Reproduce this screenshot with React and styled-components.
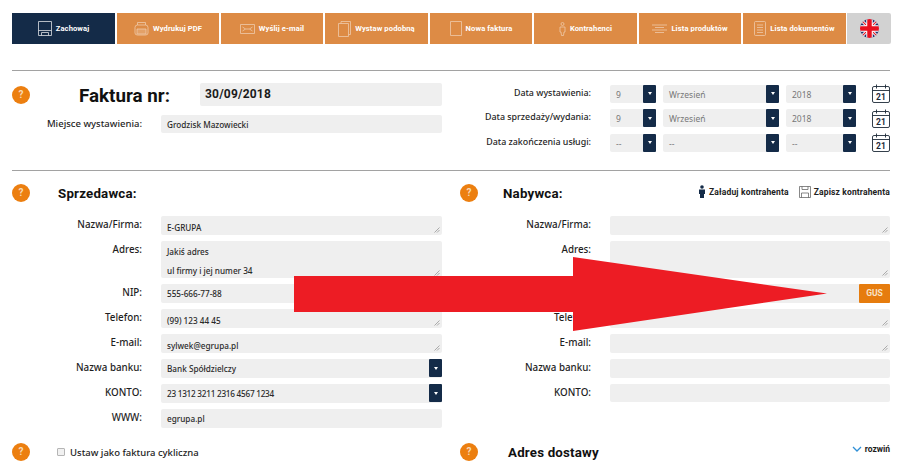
import React from "react";
import styled, { createGlobalStyle } from "styled-components";

const GlobalStyle = createGlobalStyle`
  html, body {
    margin: 0;
    padding: 0;
    background: #fff;
  }
  body {
    font-family: "Noto Sans", "Open Sans", sans-serif;
    color: #1b1b1b;
    overflow: hidden;
  }
`;

const Page = styled.div`
  position: relative;
  width: 900px;
  height: 467px;
  overflow: hidden;
  padding: 13px 10px 0 12px;
  box-sizing: border-box;
`;

const Toolbar = styled.div`
  display: grid;
  grid-template-columns: 103px 102px 102px 103px 102px 103px 102px 103px 43px;
  column-gap: 2px;
  height: 31px;
`;

const ToolButton = styled.div`
  display: flex;
  align-items: center;
  justify-content: center;
  gap: 4px;
  background: ${(p) => (p.$active ? "#142b48" : "#dd8b45")};
  color: #fff;
  font-family: "Roboto", sans-serif;
  font-size: 7.6px;
  font-weight: 700;
  letter-spacing: 0.1px;
  white-space: nowrap;
  svg {
    flex: none;
    opacity: ${(p) => (p.$active ? 0.85 : 0.55)};
  }
`;

const FlagButton = styled.div`
  display: flex;
  align-items: center;
  justify-content: center;
  background: #d2d2d2;
  border-radius: 0 2px 2px 0;
  margin-left: -1px;
`;

const Divider = styled.div`
  height: 1px;
  background: #a2a2a2;
  margin-top: ${(p) => p.$top || 0}px;
`;

const Columns = styled.div`
  display: grid;
  grid-template-columns: 430px 430px;
  column-gap: 18px;
`;

const TopLeft = styled.div`
  display: flex;
  flex-direction: column;
  gap: 9px;
  padding-top: 12px;
  height: 87px;
`;

const TitleRow = styled.div`
  display: flex;
  align-items: center;
  height: 23px;
`;

const HelpDot = styled.div`
  flex: none;
  width: 18px;
  height: 18px;
  border-radius: 50%;
  background: #ec7f10;
  color: #f7d9b5;
  font-family: "Roboto", sans-serif;
  font-size: 10px;
  font-weight: 700;
  line-height: 18px;
  text-align: center;
`;

const InvoiceTitle = styled.div`
  width: 120px;
  margin-left: 49px;
  padding-top: 3px;
  font-family: "Roboto", sans-serif;
  font-size: 18.8px;
  font-weight: 700;
  color: #111;
  white-space: nowrap;
`;

const NumberBox = styled.div`
  flex: 1;
  height: 23px;
  margin-left: 1px;
  padding-left: 5px;
  background: #efefef;
  border-radius: 2px;
  font-family: "Roboto", sans-serif;
  font-size: 12px;
  font-weight: 700;
  line-height: 22px;
  letter-spacing: 0.2px;
`;

const Row = styled.div`
  display: grid;
  grid-template-columns: ${(p) => (p.$right ? "131px 280px" : "130px 281px")};
  column-gap: 19px;
`;

const Label = styled.div`
  text-align: right;
  font-size: ${(p) => (p.$big ? "9.8px" : "9.5px")};
  font-weight: 500;
  line-height: 15px;
  padding-top: 1px;
  white-space: nowrap;
  color: #1f1f1f;
`;

const Field = styled.div`
  position: relative;
  display: flex;
  flex-direction: column;
  justify-content: center;
  height: ${(p) => p.$h || 19}px;
  padding-left: 6px;
  padding-top: ${(p) => (p.$low ? 3 : 0)}px;
  box-sizing: border-box;
  background: #efefef;
  border-radius: 2px;
  font-size: 8.2px;
  font-weight: 500;
  color: #2a2a2a;
`;

const AddressLine = styled.div`
  margin-top: ${(p) => (p.$next ? 8 : 0)}px;
`;

const AccountNumber = styled.div`
  letter-spacing: -0.25px;
`;

const Grip = styled.svg`
  position: absolute;
  right: 2px;
  bottom: 2px;
`;

const DateColumn = styled.div`
  display: flex;
  flex-direction: column;
  gap: 5.5px;
  padding-top: 13px;
`;

const DateRow = styled.div`
  display: grid;
  grid-template-columns: 143px 46px 116px 70px 27px;
  column-gap: 7px;
  height: 19px;
  align-items: center;
  & > :last-child {
    margin-left: 9px;
  }
`;

const DateLabel = styled(Label)`
  padding: 0 12px 3px 0;
  font-size: 8.9px;
  line-height: 15px;
`;

const SelectBox = styled.div`
  position: relative;
  height: 18px;
  padding-left: 6px;
  background: #efefef;
  border-radius: 2px;
  font-size: 8.5px;
  line-height: 19px;
  color: #777;
`;

const SelectButton = styled.div`
  position: absolute;
  top: 0;
  right: 0;
  width: 13px;
  height: 18px;
  display: flex;
  align-items: center;
  justify-content: center;
  background: #142b48;
  border-radius: 1px;
  &::after {
    content: "";
    border-left: 2px solid transparent;
    border-right: 2px solid transparent;
    border-top: 3px solid #fff;
  }
`;

const SectionHead = styled.div`
  display: flex;
  align-items: center;
  height: 18px;
  margin-top: 13px;
`;

const SectionTitle = styled.div`
  margin-left: ${(p) => p.$indent}px;
  font-family: "Roboto", sans-serif;
  font-size: 13.3px;
  font-weight: 700;
  letter-spacing: 0.2px;
  color: #111;
`;

const HeadActions = styled.div`
  display: flex;
  align-items: center;
  gap: 10px;
  margin-left: auto;
  margin-top: -3px;
`;

const HeadAction = styled.div`
  display: flex;
  align-items: center;
  gap: 3px;
  font-family: "Roboto", sans-serif;
  font-size: 8.5px;
  font-weight: 700;
  letter-spacing: 0.15px;
  white-space: nowrap;
  color: #222;
`;

const Fields = styled.div`
  display: flex;
  flex-direction: column;
  gap: 6px;
  margin-top: 14px;
`;

const FootRow = styled.div`
  display: flex;
  align-items: center;
  height: 18px;
  margin-top: ${(p) => p.$top}px;
`;

const CheckBox = styled.div`
  width: 6px;
  height: 6px;
  margin-left: 27px;
  border: 1px solid #b5b5b5;
  border-radius: 1px;
  background: #f1f1f1;
`;

const CheckLabel = styled.div`
  margin-left: 5px;
  font-size: 9.5px;
  font-weight: 500;
`;

const Expand = styled.div`
  display: flex;
  align-items: center;
  gap: 3px;
  margin-left: auto;
  margin-top: -7px;
  font-family: "Roboto", sans-serif;
  font-size: 8.5px;
  font-weight: 700;
`;

const GusButton = styled.div`
  position: absolute;
  top: 0;
  right: 0;
  width: 31px;
  height: 19px;
  background: #e67c0e;
  border-radius: 1px;
  color: #f8e3c8;
  font-family: "Roboto", sans-serif;
  font-size: 8.5px;
  font-weight: 700;
  line-height: 18px;
  text-align: center;
`;

const Arrow = styled.svg`
  position: absolute;
  left: 294px;
  top: 257px;
`;

const Icon = ({ children, w = 16, h = 16 }) => (
  <svg width={w} height={h} viewBox={`0 0 ${w} ${h}`} fill="none" stroke="#fff" strokeWidth="0.8">
    {children}
  </svg>
);

const SaveIcon = () => (
  <Icon w={14} h={15}>
    <path d="M.5.5h13v14H.5z" />
    <path d="M.5 9.5h13M3.5 14.5v-3h7v3" />
  </Icon>
);

const PrintIcon = () => (
  <Icon w={15} h={15}>
    <path d="M3.5 4V1.5h8V4M1 6.5Q1 4 3.5 4h8Q14 4 14 6.5v5.5Q14 14 11.5 14h-8Q1 14 1 12z" />
    <path d="M3 8h9v5H3z" fill="#fff" fillOpacity=".35" />
  </Icon>
);

const MailIcon = () => (
  <Icon w={15} h={10}>
    <path d="M.5.5h14v9H.5z" />
    <path d="M2.5 3l3 2-3 2M12.5 3l-3 2 3 2M5.5 5h4" />
  </Icon>
);

const DocIcon = () => (
  <Icon w={13} h={16}>
    <path d="M.5 2.5h10v13H.5zM3 2.5V.5h9.500v13h-2" />
  </Icon>
);

const SheetIcon = () => (
  <Icon w={12} h={15}>
    <path d="M.5.5h11v14H.5z" />
  </Icon>
);

const PersonIcon = () => (
  <Icon w={7} h={14}>
    <circle cx="3.500" cy="2" r="1.500" />
    <path d="M1 5h5v5H5l-.5 3.500h-2L2 10H1z" />
  </Icon>
);

const ListIcon = () => (
  <Icon w={15} h={10}>
    <path d="M0 1h15M3 3.500h9M0 6h15M3 8.500h9" />
  </Icon>
);

const BookIcon = () => (
  <Icon w={12} h={15}>
    <path d="M1.500.5h9q1 0 1 1v12q0 1-1 1h-9q-1 0-1-1v-12q0-1 1-1z" />
    <path d="M3 4h6M3 6.500h6M3 9h6M3 11.500h6" />
  </Icon>
);

const UkFlag = () => (
  <svg width="19" height="19" viewBox="0 0 19 19">
    <defs>
      <clipPath id="flagCircle">
        <circle cx="9.500" cy="9.500" r="9.500" />
      </clipPath>
    </defs>
    <g clipPath="url(#flagCircle)">
      <rect width="19" height="19" fill="#1f2f6b" />
      <path d="M0 0L19 19M19 0L0 19" stroke="#fff" strokeWidth="3" />
      <path d="M0 0L19 19M19 0L0 19" stroke="#e01f2d" strokeWidth="1.200" />
      <path d="M9.500 0v19M0 9.500h19" stroke="#fff" strokeWidth="6.500" />
      <path d="M9.500 0v19M0 9.500h19" stroke="#e8101f" strokeWidth="4.500" />
    </g>
  </svg>
);

const CalendarIcon = () => (
  <svg width="18" height="19" viewBox="0 0 18 19" fill="none" stroke="#1d2a38" strokeWidth="0.9">
    <rect x="0.500" y="2.500" width="17" height="16" rx="1.500" />
    <path d="M.5 6.500h17M4.500 .5v4M13.500 .5v4" />
    <text x="9" y="16" textAnchor="middle" fontFamily="Roboto, sans-serif" fontSize="8.500" fontWeight="700" fill="#1d2a38" stroke="none">
      21
    </text>
  </svg>
);

const ResizeGrip = () => (
  <Grip width="6" height="6" viewBox="0 0 6 6" stroke="#8d8d8d" strokeWidth="0.7">
    <path d="M.5 5.500l5-5M3 5.500l2.500-2.500" />
  </Grip>
);

const tools = [
  ["Wydrukuj PDF", PrintIcon],
  ["Wyślij e-mail", MailIcon],
  ["Wystaw podobną", DocIcon],
  ["Nowa faktura", SheetIcon],
  ["Kontrahenci", PersonIcon],
  ["Lista produktów", ListIcon],
  ["Lista dokumentów", BookIcon],
];

const dates = [
  ["Data wystawienia:", "9", "Wrzesień", "2018"],
  ["Data sprzedaży/wydania:", "9", "Wrzesień", "2018"],
  ["Data zakończenia usługi:", "--", "--", "--"],
];

const Select = ({ value }) => (
  <SelectBox>
    {value}
    <SelectButton />
  </SelectBox>
);

const FormRow = ({ label, right, h, grip, low, children }) => (
  <Row $right={right}>
    <Label $big>{label}</Label>
    <Field $h={h} $low={low}>
      {children}
      {grip && <ResizeGrip />}
    </Field>
  </Row>
);

export default function App() {
  return (
    <Page>
      <GlobalStyle />
      <Toolbar>
        <ToolButton $active>
          <SaveIcon />
          Zachowaj
        </ToolButton>
        {tools.map(([name, ToolIcon]) => (
          <ToolButton key={name}>
            <ToolIcon />
            {name}
          </ToolButton>
        ))}
        <FlagButton>
          <UkFlag />
        </FlagButton>
      </Toolbar>

      <Divider $top={26} />
      <Columns>
        <TopLeft>
          <TitleRow>
            <HelpDot>?</HelpDot>
            <InvoiceTitle>Faktura nr:</InvoiceTitle>
            <NumberBox>30/09/2018</NumberBox>
          </TitleRow>
          <Row>
            <Label>Miejsce wystawienia:</Label>
            <Field $h={18}>Grodzisk Mazowiecki</Field>
          </Row>
        </TopLeft>
        <DateColumn>
          {dates.map(([label, day, month, year]) => (
            <DateRow key={label}>
              <DateLabel>{label}</DateLabel>
              <Select value={day} />
              <Select value={month} />
              <Select value={year} />
              <CalendarIcon />
            </DateRow>
          ))}
        </DateColumn>
      </Columns>
      <Divider />

      <Columns>
        <div>
          <SectionHead>
            <HelpDot>?</HelpDot>
            <SectionTitle $indent={28}>Sprzedawca:</SectionTitle>
          </SectionHead>
          <Fields>
            <FormRow label="Nazwa/Firma:" grip low>E-GRUPA</FormRow>
            <FormRow label="Adres:" h={37} grip low>
              <AddressLine>Jakiś adres</AddressLine>
              <AddressLine $next>ul firmy i jej numer 34</AddressLine>
            </FormRow>
            <FormRow label="NIP:">555-666-77-88</FormRow>
            <FormRow label="Telefon:" grip low>(99) 123 44 45</FormRow>
            <FormRow label="E-mail:" grip low>sylwek@egrupa.pl</FormRow>
            <FormRow label="Nazwa banku:">
              Bank Spółdzielczy
              <SelectButton />
            </FormRow>
            <FormRow label="KONTO:">
              <AccountNumber>23 1312 3211 2316 4567 1234</AccountNumber>
              <SelectButton />
            </FormRow>
            <FormRow label="WWW:">egrupa.pl</FormRow>
          </Fields>
          <FootRow $top={15}>
            <HelpDot>?</HelpDot>
            <CheckBox />
            <CheckLabel>Ustaw jako faktura cykliczna</CheckLabel>
          </FootRow>
        </div>
        <div>
          <SectionHead>
            <HelpDot>?</HelpDot>
            <SectionTitle $indent={25}>Nabywca:</SectionTitle>
            <HeadActions>
              <HeadAction>
                <svg width="8" height="13" viewBox="0 0 8 13" fill="#142b48">
                  <circle cx="4" cy="2" r="1.800" />
                  <path d="M1 4.500h6v4.500H6v4H2V9H1z" />
                </svg>
                Załaduj kontrahenta
              </HeadAction>
              <HeadAction>
                <svg width="12" height="12" viewBox="0 0 12 12" fill="none" stroke="#555" strokeWidth="0.7">
                  <path d="M.5.5h11v11H.5zM3 .5v3h6v-3M2.500 11.500V7h7v4.500" />
                </svg>
                Zapisz kontrahenta
              </HeadAction>
            </HeadActions>
          </SectionHead>
          <Fields>
            <FormRow right label="Nazwa/Firma:" grip />
            <FormRow right label="Adres:" h={37} grip />
            <FormRow right label="NIP:">
              <GusButton>GUS</GusButton>
            </FormRow>
            <FormRow right label="Telefon:" grip />
            <FormRow right label="E-mail:" grip />
            <FormRow right label="Nazwa banku:" />
            <FormRow right label="KONTO:" h={18} />
          </Fields>
          <FootRow $top={41}>
            <HelpDot>?</HelpDot>
            <SectionTitle $indent={30}>Adres dostawy</SectionTitle>
            <Expand>
              <svg width="10" height="6" viewBox="0 0 10 6" fill="none" stroke="#2f8fd6" strokeWidth="1.300">
                <path d="M1 1l4 4 4-4" />
              </svg>
              rozwiń
            </Expand>
          </FootRow>
        </div>
      </Columns>

      <Arrow width="533" height="74" viewBox="0 0 533 74">
        <path d="M0 19H279V0L533 36.500 279 74V55H0z" fill="#ed1c24" />
      </Arrow>
    </Page>
  );
}
